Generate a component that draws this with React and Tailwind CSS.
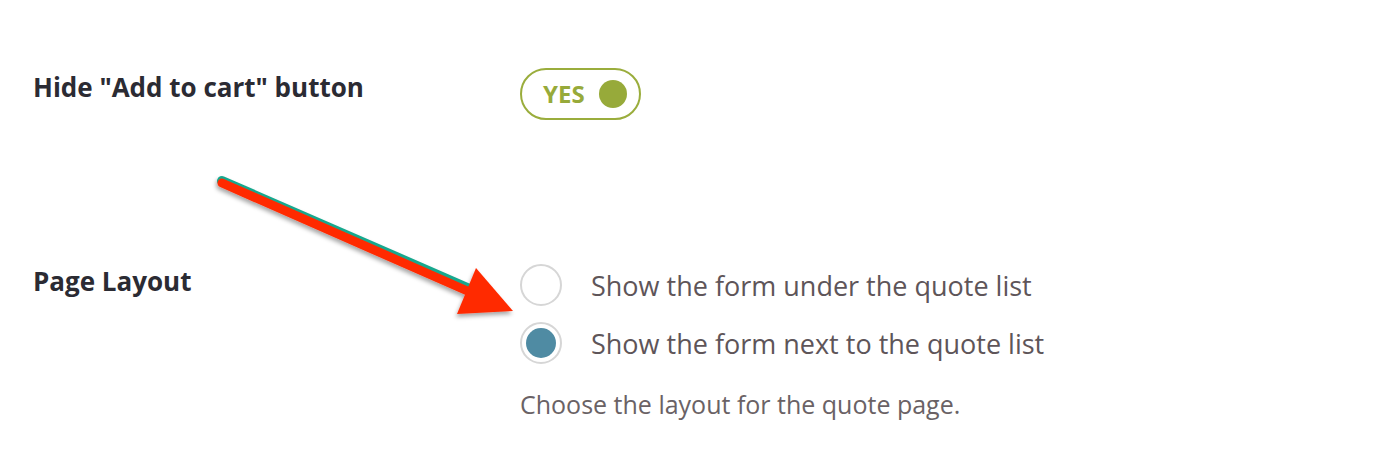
import React, { useState } from 'react';

const Toggle = ({ on, onClick }) => (
    <button
        onClick={onClick}
        className="flex items-center h-[52px] w-[121px] pl-[21px] pr-[12px] rounded-full border-2 border-[#9aad3c] bg-white"
    >
        <span className="text-[24px] font-bold text-[#97aa3a] leading-none">{on ? 'YES' : 'NO'}</span>
        <span className="ml-auto w-[28px] h-[28px] rounded-full bg-[#97aa3a]"></span>
    </button>
);

const Radio = ({ checked, label, onClick }) => (
    <label className="flex items-center cursor-pointer" onClick={onClick}>
        <span className="flex items-center justify-center w-[42px] h-[42px] rounded-full border-2 border-[#d6d6d6] bg-white">
            {checked && <span className="w-[30px] h-[30px] rounded-full bg-[#4f8ba3]"></span>}
        </span>
        <span className="ml-[29px] text-[27px] text-[#5e5559] leading-none">{label}</span>
    </label>
);

const Arrow = () => (
    <svg className="absolute left-0 top-0 pointer-events-none" width="1373" height="463" viewBox="0 0 1373 463">
        <defs>
            <filter id="shadow" x="-10%" y="-10%" width="120%" height="130%">
                <feDropShadow dx="-1" dy="3" stdDeviation="2" floodColor="#000" floodOpacity="0.35" />
            </filter>
        </defs>
        <g filter="url(#shadow)">
            <line x1="222" y1="181" x2="472" y2="290" stroke="#19a88e" strokeWidth="10" strokeLinecap="round" />
            <line x1="222" y1="183" x2="472" y2="293" stroke="#ff2a00" strokeWidth="9" strokeLinecap="round" />
            <polygon points="476,268 513,311 457,314" fill="#ff2a00" />
        </g>
    </svg>
);

export default function App() {
    const [hide, setHide] = useState(true);
    const [layout, setLayout] = useState('next');

    return (
        <div className="relative w-[1373px] h-[463px] bg-white overflow-hidden" style={{ fontFamily: '"Open Sans", "Noto Sans", sans-serif' }}>
            <div className="flex flex-col pl-[33px] pt-[68px]">
                <div className="flex">
                    <div className="w-[487px] pt-[5px] text-[26px] font-bold text-[#2b2b33] leading-[28px]">Hide "Add to cart" button</div>
                    <Toggle on={hide} onClick={() => setHide(!hide)} />
                </div>
                <div className="flex mt-[144px]">
                    <div className="w-[487px] pt-[3px] text-[26px] font-bold text-[#2b2b33] leading-[28px]">Page Layout</div>
                    <div className="flex flex-col">
                        <div className="flex flex-col gap-[16px]">
                            <Radio label="Show the form under the quote list" checked={layout === 'under'} onClick={() => setLayout('under')} />
                            <Radio label="Show the form next to the quote list" checked={layout === 'next'} onClick={() => setLayout('next')} />
                        </div>
                        <p className="mt-[28px] text-[25px] text-[#6a6265] leading-none">Choose the layout for the quote page.</p>
                    </div>
                </div>
            </div>
            <Arrow />
        </div>
    );
}
